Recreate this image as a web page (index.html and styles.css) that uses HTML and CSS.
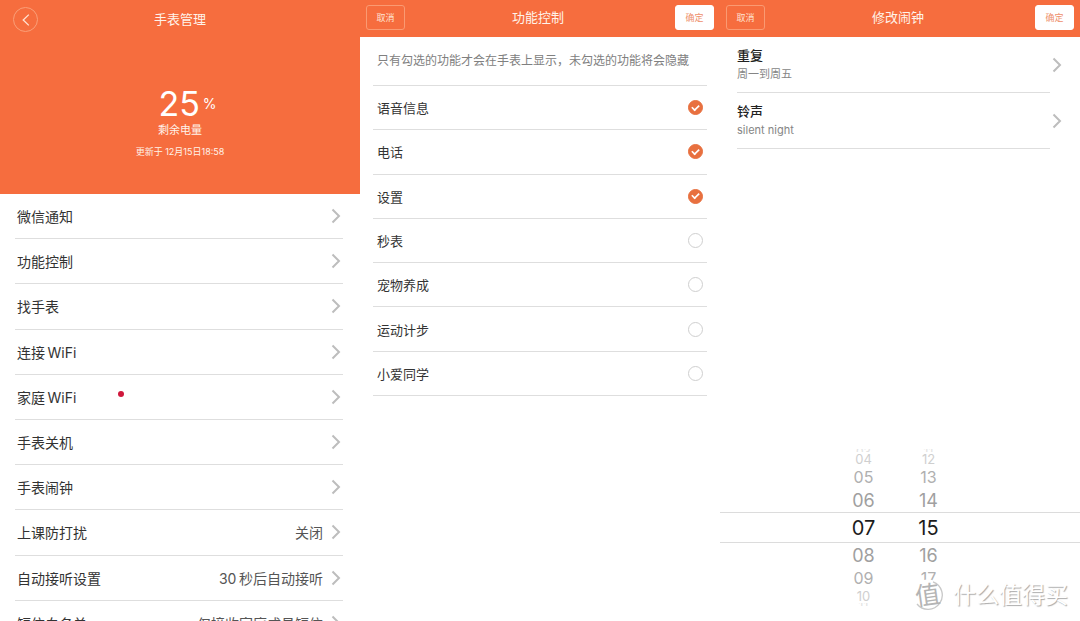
FILE: index.html
```html
<!DOCTYPE html>
<html lang="zh-CN">
<head>
<meta charset="utf-8">
<meta name="viewport" content="width=device-width, initial-scale=1">
<title>手表管理</title>
<link rel="stylesheet" href="styles.css">
</head>
<body>
<svg class="defs" aria-hidden="true">
  <symbol id="chevron" viewBox="0 0 10 16"><path d="M1.5 1.5 8 8 1.5 14.5" fill="none" stroke="currentColor" stroke-width="2"/></symbol>
</svg>
<main class="screens">
  <section class="screen">
    <header class="hero">
      <div class="hero-bar">
        <button class="back" type="button" aria-label="返回">
          <svg class="back-icon" viewBox="0 0 8 12" aria-hidden="true"><path d="M6.8.6 1.2 6l5.6 5.4" fill="none" stroke="currentColor" stroke-width="1.3"/></svg>
        </button>
        <h1 class="title">手表管理</h1>
      </div>
      <div class="battery">
        <p class="battery-value">25<span class="battery-unit">%</span></p>
        <p class="battery-label">剩余电量</p>
        <p class="battery-time">更新于 12月15日18:58</p>
      </div>
    </header>
    <ul class="menu">
      <li><a class="menu-row" href="#"><span>微信通知</span><svg class="chevron"><use href="#chevron"/></svg></a></li>
      <li><a class="menu-row" href="#"><span>功能控制</span><svg class="chevron"><use href="#chevron"/></svg></a></li>
      <li><a class="menu-row" href="#"><span>找手表</span><svg class="chevron"><use href="#chevron"/></svg></a></li>
      <li><a class="menu-row" href="#"><span>连接&thinsp;WiFi</span><svg class="chevron"><use href="#chevron"/></svg></a></li>
      <li><a class="menu-row" href="#"><span>家庭&thinsp;WiFi</span><i class="dot"></i><svg class="chevron"><use href="#chevron"/></svg></a></li>
      <li><a class="menu-row" href="#"><span>手表关机</span><svg class="chevron"><use href="#chevron"/></svg></a></li>
      <li><a class="menu-row" href="#"><span>手表闹钟</span><svg class="chevron"><use href="#chevron"/></svg></a></li>
      <li><a class="menu-row" href="#"><span>上课防打扰</span><span class="menu-value">关闭</span><svg class="chevron"><use href="#chevron"/></svg></a></li>
      <li><a class="menu-row" href="#"><span>自动接听设置</span><span class="menu-value">30&thinsp;秒后自动接听</span><svg class="chevron"><use href="#chevron"/></svg></a></li>
      <li><a class="menu-row" href="#"><span>短信白名单</span><span class="menu-value">仅接收家庭成员短信</span><svg class="chevron"><use href="#chevron"/></svg></a></li>
    </ul>
  </section>

  <section class="screen">
    <header class="bar">
      <button class="btn" type="button">取消</button>
      <h2 class="title bar-title">功能控制</h2>
      <button class="btn btn-solid" type="button">确定</button>
    </header>
    <p class="note">只有勾选的功能才会在手表上显示，未勾选的功能将会隐藏</p>
    <div class="features">
      <label class="feature">语音信息<input class="check" type="checkbox" checked></label>
      <label class="feature">电话<input class="check" type="checkbox" checked></label>
      <label class="feature">设置<input class="check" type="checkbox" checked></label>
      <label class="feature">秒表<input class="check" type="checkbox"></label>
      <label class="feature">宠物养成<input class="check" type="checkbox"></label>
      <label class="feature">运动计步<input class="check" type="checkbox"></label>
      <label class="feature">小爱同学<input class="check" type="checkbox"></label>
    </div>
  </section>

  <section class="screen">
    <header class="bar">
      <button class="btn" type="button">取消</button>
      <h2 class="title bar-title">修改闹钟</h2>
      <button class="btn btn-solid" type="button">确定</button>
    </header>
    <div class="options">
      <a class="option" href="#"><span class="option-text"><span class="option-name">重复</span><span class="option-detail">周一到周五</span></span><svg class="chevron"><use href="#chevron"/></svg></a>
      <a class="option" href="#"><span class="option-text"><span class="option-name">铃声</span><span class="option-detail">silent night</span></span><svg class="chevron"><use href="#chevron"/></svg></a>
    </div>
    <div class="picker">
      <div class="tick edge"><span>03</span><span>11</span></div>
      <div class="tick far"><span>04</span><span>12</span></div>
      <div class="tick mid"><span>05</span><span>13</span></div>
      <div class="tick near"><span>06</span><span>14</span></div>
      <div class="tick current"><span>07</span><span>15</span></div>
      <div class="tick near"><span>08</span><span>16</span></div>
      <div class="tick mid"><span>09</span><span>17</span></div>
      <div class="tick far"><span>10</span><span>18</span></div>
      <div class="tick edge edge-bottom"><span>11</span><span>19</span></div>
    </div>
    <div class="watermark">
      <svg class="watermark-logo" viewBox="0 0 32 32" aria-hidden="true">
        <circle cx="16" cy="16" r="15.5" fill="#fff"/>
        <path d="M21 2.8A14.2 14.2 0 1 1 5 25" fill="none" stroke="#c8c8c8" stroke-width="1.3"/>
        <text class="watermark-glyph" x="3" y="25" transform="rotate(-8 16 16)">值</text>
      </svg>
      <span class="watermark-text">什么值得买</span>
    </div>
  </section>
</main>
</body>
</html>
```
FILE: styles.css
```css
* {
  box-sizing: border-box;
}

body {
  margin: 0;
  font-family: Inter, "Noto Sans CJK SC", sans-serif;
  font-size: 14px;
  color: #333;
  background: #fff;
}

h1, h2, p, ul {
  margin: 0;
  padding: 0;
}

ul {
  list-style: none;
}

a {
  color: inherit;
  text-decoration: none;
}

button {
  font: inherit;
  padding: 0;
}

.defs {
  display: none;
}

.screens {
  display: grid;
  grid-template-columns: repeat(3, minmax(0, 1fr));
  height: 100vh;
  overflow: hidden;
}

.screen {
  position: relative;
  display: flex;
  flex-direction: column;
  min-height: 0;
}

.title {
  padding-bottom: 2px;
  font-size: 13px;
  line-height: 20px;
  font-weight: 400;
  color: #fff3ea;
  text-align: center;
}

/* Battery header */
.hero {
  flex: none;
  background: #f66d3e;
  color: #fff3ea;
  padding: 7px 13px 35px;
}

.hero-bar {
  display: grid;
  grid-template-columns: 25px 1fr 25px;
  align-items: center;
}

.back {
  display: grid;
  place-items: center;
  width: 25px;
  height: 25px;
  border: 1px solid #fa9f78;
  border-radius: 50%;
  background: none;
  color: #ffe3d3;
}

.back-icon {
  width: 8px;
  height: 12px;
}

.battery {
  display: flex;
  flex-direction: column;
  align-items: center;
  padding-top: 54px;
}

.battery-value {
  display: flex;
  align-items: center;
  gap: 3px;
  padding-left: 15px;
  font-size: 34px;
  line-height: 36px;
  color: #fff;
}

.battery-unit {
  font-size: 14px;
}

.battery-label {
  font-size: 11px;
  line-height: 17px;
}

.battery-time {
  padding-top: 5px;
  font-size: 9px;
  line-height: 15px;
}

/* Settings menu: ten equal rows, the last one runs below the fold */
.menu {
  flex: none;
  display: grid;
  grid-auto-rows: 1fr;
  height: 452px;
  padding: 0 17px 0 15px;
}

.menu-row {
  display: flex;
  align-items: center;
  height: 100%;
  padding: 0 2px;
  border-bottom: 1px solid #dedede;
}

.menu-value {
  margin-left: auto;
  color: #555;
}

.chevron {
  flex: none;
  width: 10px;
  height: 16px;
  margin-left: auto;
  color: #bdbdbd;
}

.menu-value + .chevron {
  margin-left: 8px;
}

.dot {
  width: 6px;
  height: 6px;
  margin: 0 0 6px 42px;
  border-radius: 50%;
  background: #d0183c;
}

/* Title bar with actions */
.bar {
  display: flex;
  align-items: center;
  padding: 5px 6px 7px;
  background: #f66d3e;
}

.bar-title {
  flex: 1;
  padding-right: 4px;
}

.btn {
  width: 39px;
  height: 25px;
  border: 1px solid #fa9a72;
  border-radius: 3px;
  background: none;
  color: #ffe3d3;
  font-size: 9px;
}

.btn-solid {
  border-color: #fff;
  background: #fff;
  color: #ee8f6c;
}

/* Feature list */
.note {
  margin: 0 13px;
  padding: 14px 0 14px 4px;
  border-bottom: 1px solid #dedede;
  font-size: 12px;
  line-height: 20px;
  color: #808080;
  white-space: nowrap;
}

.features {
  display: grid;
  grid-auto-rows: 1fr;
  height: 310px;
  padding: 0 13px;
}

.feature {
  display: flex;
  align-items: center;
  justify-content: space-between;
  padding: 0 4px;
  border-bottom: 1px solid #dedede;
  font-size: 13px;
}

.check {
  display: grid;
  place-items: center;
  appearance: none;
  width: 15px;
  height: 15px;
  margin: 0;
  border: 1px solid #cfcfcf;
  border-radius: 50%;
}

.check:checked {
  border-color: #e8703f;
  background: #e8703f;
}

.check:checked::after {
  content: "";
  width: 7px;
  height: 4px;
  margin-bottom: 2px;
  border: solid #fff;
  border-width: 0 0 2px 2px;
  transform: rotate(-45deg) scale(0.8);
}

/* Alarm options */
.options {
  padding: 0 18px 0 17px;
}

.option {
  display: flex;
  align-items: center;
  gap: 2px;
}

.option-text {
  flex: 1;
  display: flex;
  flex-direction: column;
  padding: 8px 0 9px;
  border-bottom: 1px solid #dedede;
}

.option-name {
  font-size: 13px;
  line-height: 20px;
  font-weight: 500;
  color: #222;
}

.option-detail {
  font-size: 11px;
  line-height: 18px;
  color: #858585;
}

/* Time picker */
.picker {
  margin-top: auto;
  padding-bottom: 15px;
}

.tick {
  display: grid;
  grid-template-columns: 65px 65px;
  justify-content: center;
  align-items: center;
  padding-right: 8px;
  text-align: center;
  overflow: hidden;
}

.current {
  height: 31px;
  border: solid #dcdcdc;
  border-width: 1px 0;
  font-size: 20px;
  color: #1c1c1c;
}

.near {
  height: 24px;
  font-size: 18px;
  color: #a0a0a0;
}

.mid {
  height: 22px;
  font-size: 16px;
  color: #b0b0b0;
}

.far {
  height: 14px;
  font-size: 13px;
  line-height: 14px;
  color: #cfcfcf;
}

.edge {
  height: 3px;
  align-items: end;
  font-size: 12px;
  line-height: 6px;
  color: #e2e2e2;
}

.edge-bottom {
  align-items: start;
}

/* Overlaid site mark */
.watermark {
  position: absolute;
  right: 12px;
  bottom: 10px;
  display: flex;
  align-items: center;
  gap: 9px;
}

.watermark-logo {
  width: 32px;
  height: 32px;
}

.watermark-glyph {
  font-size: 25px;
  fill: #b4b4b4;
}

.watermark-text {
  font-size: 23px;
  line-height: 32px;
  color: #fff;
  text-shadow: 1px 1px 1px #aaa;
}
```
